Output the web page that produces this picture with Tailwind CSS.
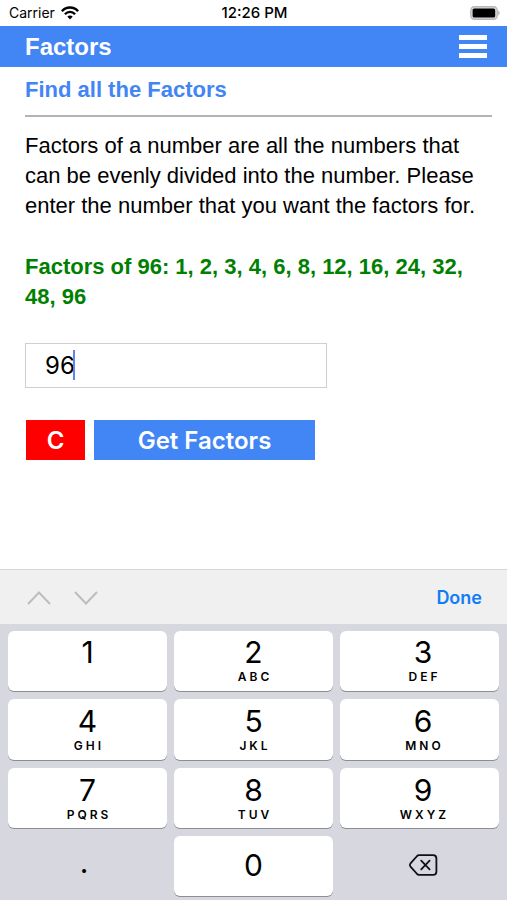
<!DOCTYPE html>
<html lang="en">
<head>
<meta charset="utf-8">
<meta name="viewport" content="width=device-width, initial-scale=1">
<title>Factors</title>
<script src="https://cdn.jsdelivr.net/npm/@tailwindcss/browser@4"></script>
</head>
<body class="flex min-h-screen flex-col bg-white font-['Liberation_Sans',Arial,sans-serif] text-black">

<!-- Status bar -->
<div class="grid h-[26px] grid-cols-3 items-center pr-[7px] pl-[9px] font-['Inter',sans-serif] text-[14px] leading-5">
  <div class="flex items-center gap-[6px]">
    <span>Carrier</span>
    <svg class="h-[14px] w-[18px]" viewBox="0 0 18 14" fill="none" stroke="#000" stroke-width="2.4" aria-hidden="true">
      <path d="M0.9 5.2C5.4 0.3 12.6 0.3 17.1 5.2"/>
      <path d="M3.9 8.2C6.8 5.1 11.2 5.1 14.1 8.2"/>
      <path d="M6.3 10.6C7.8 9 10.2 9 11.7 10.6L9 13.4Z" fill="#000" stroke="none"/>
    </svg>
  </div>
  <span class="text-center text-[15px] font-medium whitespace-nowrap">12:26 PM</span>
  <svg class="h-[14px] w-[30px] justify-self-end" viewBox="0 0 30 14" aria-hidden="true">
    <rect x="0.8" y="0.8" width="26.4" height="12.4" rx="3.6" fill="#dcdcdc" stroke="#b9b9b9" stroke-width="1.4"/>
    <rect x="2.6" y="2.4" width="22.6" height="9.2" rx="1.6" fill="#000"/>
    <path d="M28.2 4.6C30.2 5.6 30.2 8.4 28.2 9.4Z" fill="#b5b5b5"/>
  </svg>
</div>

<!-- Title bar -->
<header class="flex h-[41px] items-center justify-between bg-[#4285f4] pr-[20px] pl-[25px]">
  <h1 class="text-[24px] leading-[30px] font-bold text-white">Factors</h1>
  <button type="button" aria-label="Menu" class="flex w-[28px] flex-col gap-[4px]">
    <span class="h-[5px] bg-white"></span>
    <span class="h-[5px] bg-white"></span>
    <span class="h-[5px] bg-white"></span>
  </button>
</header>

<main class="px-[25px] pt-[8px] text-[22px] leading-[30px]">
  <h2 class="font-bold text-[#4285f4]">Find all the Factors</h2>
  <hr class="mt-[10px] -mr-[10px] border-t-2 border-[#b4b4b4]">
  <p class="mt-[14px]">Factors of a number are all the numbers that can be evenly divided into the number. Please enter the number that you want the factors for.</p>
  <p class="mt-[31px] font-bold text-[#008000]">Factors of 96: 1, 2, 3, 4, 6, 8, 12, 16, 24, 32, 48, 96</p>
  <div class="relative mt-[31px] w-[302px] font-['Inter',sans-serif] text-[24px]">
    <input id="number" type="text" inputmode="decimal" value="96" aria-label="Number" class="block h-[45px] w-full border border-[#cfcfcf] px-[19px] outline-none">
    <span class="absolute top-[7px] left-[48px] h-[30px] w-[2px] bg-[#6284ef]"></span>
  </div>
  <div class="mt-[32px] flex gap-[9px] px-px font-['Inter',sans-serif] text-[24px] font-semibold text-white">
    <button type="button" aria-label="Clear" class="h-[40px] w-[59px] bg-[#ff0000] pt-[2px]">C</button>
    <button type="button" class="h-[40px] w-[221px] bg-[#4285f4] pt-[2px]">Get Factors</button>
  </div>
</main>

<!-- On-screen keyboard -->
<section class="mt-auto font-['Inter',sans-serif]" aria-label="Keyboard">
  <div class="flex h-[55px] items-center justify-between border-t border-[#d6d6d6] bg-[#f0f0f0] pt-[2px] pr-[25px] pl-[27px]">
    <div class="flex gap-[23px]">
      <button type="button" aria-label="Previous field">
        <svg class="h-[14px] w-[24px]" viewBox="0 0 24 14" fill="none" stroke="#bdbdbd" stroke-width="2"><path d="M1 13L12 1.5L23 13"/></svg>
      </button>
      <button type="button" aria-label="Next field">
        <svg class="h-[14px] w-[24px]" viewBox="0 0 24 14" fill="none" stroke="#bdbdbd" stroke-width="2"><path d="M1 1L12 12.5L23 1"/></svg>
      </button>
    </div>
    <button type="button" class="text-[18px] leading-6 font-semibold text-[#107cf6]">Done</button>
  </div>
  <div class="grid h-[276px] grid-cols-3 grid-rows-4 gap-x-[7px] gap-y-[8px] bg-[#d6d7df] px-[8px] pt-[7px] pb-[4px] text-[30px] leading-[32px]">
    <button type="button" class="flex flex-col items-center rounded-[6px] bg-white pt-[5px] shadow-[0_1px_0_#8d8e93]"><span>1</span></button>
    <button type="button" class="flex flex-col items-center rounded-[6px] bg-white pt-[5px] shadow-[0_1px_0_#8d8e93]"><span>2</span><span class="pl-[3px] text-[12px] leading-[18px] font-semibold tracking-[3px]">ABC</span></button>
    <button type="button" class="flex flex-col items-center rounded-[6px] bg-white pt-[5px] pl-[7px] shadow-[0_1px_0_#8d8e93]"><span>3</span><span class="pl-[3px] text-[12px] leading-[18px] font-semibold tracking-[3px]">DEF</span></button>
    <button type="button" class="flex flex-col items-center rounded-[6px] bg-white pt-[6px] shadow-[0_1px_0_#8d8e93]"><span>4</span><span class="pl-[3px] text-[12px] leading-[18px] font-semibold tracking-[3px]">GHI</span></button>
    <button type="button" class="flex flex-col items-center rounded-[6px] bg-white pt-[6px] shadow-[0_1px_0_#8d8e93]"><span>5</span><span class="pl-[3px] text-[12px] leading-[18px] font-semibold tracking-[3px]">JKL</span></button>
    <button type="button" class="flex flex-col items-center rounded-[6px] bg-white pt-[6px] pl-[7px] shadow-[0_1px_0_#8d8e93]"><span>6</span><span class="pl-[3px] text-[12px] leading-[18px] font-semibold tracking-[3px]">MNO</span></button>
    <button type="button" class="flex flex-col items-center rounded-[6px] bg-white pt-[6px] shadow-[0_1px_0_#8d8e93]"><span>7</span><span class="pl-[3px] text-[12px] leading-[18px] font-semibold tracking-[3px]">PQRS</span></button>
    <button type="button" class="flex flex-col items-center rounded-[6px] bg-white pt-[6px] shadow-[0_1px_0_#8d8e93]"><span>8</span><span class="pl-[3px] text-[12px] leading-[18px] font-semibold tracking-[3px]">TUV</span></button>
    <button type="button" class="flex flex-col items-center rounded-[6px] bg-white pt-[6px] pl-[7px] shadow-[0_1px_0_#8d8e93]"><span>9</span><span class="pl-[3px] text-[12px] leading-[18px] font-semibold tracking-[3px]">WXYZ</span></button>
    <button type="button" class="pr-[7px] pb-[8px]">.</button>
    <button type="button" class="rounded-[6px] bg-white pb-[2px] shadow-[0_1px_0_#8d8e93]">0</button>
    <button type="button" aria-label="Delete" class="flex items-center justify-center pb-[2px] pl-[7px]">
      <svg class="h-[22px] w-[30px]" viewBox="0 0 30 22" fill="none" stroke="#111" stroke-width="1.8" stroke-linecap="round" stroke-linejoin="round">
        <path d="M11 1.2H25.2Q28.4 1.2 28.4 4.6V17.4Q28.4 20.8 25.2 20.8H11Q9.9 20.8 9.1 20L2.3 12.3Q1.3 11 2.3 9.7L9.1 2Q9.9 1.2 11 1.2Z"/>
        <path d="M13.2 6.7L21.6 15.3M21.6 6.7L13.2 15.3"/>
      </svg>
    </button>
  </div>
</section>
</body>
</html>
